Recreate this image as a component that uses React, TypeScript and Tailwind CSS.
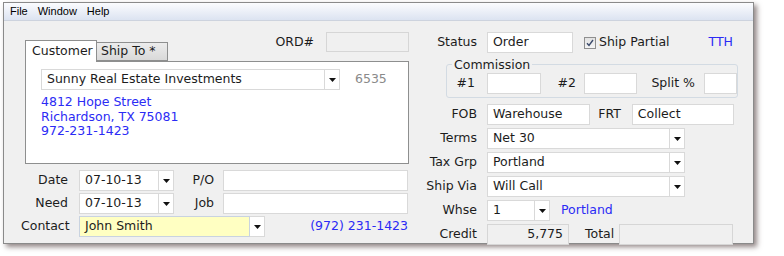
import React from "react"

const font = { fontFamily: '"DejaVu Sans", Verdana, sans-serif' }

function Caret() {
  return (
    <svg width="7" height="4" viewBox="0 0 7 4">
      <polygon points="0,0 7,0 3.5,4" fill="#111" />
    </svg>
  )
}

function DropButton({ className = "" }: { className?: string }) {
  return (
    <div className={`flex h-full w-[15px] items-center justify-center border border-[#d9d9d9] bg-white ${className}`}>
      <Caret />
    </div>
  )
}

function Field({ value = "", className = "", align = "left" }: { value?: string; className?: string; align?: "left" | "right" }) {
  return (
    <div
      className={`flex h-full items-center border border-[#d9d9d9] bg-white px-[5px] ${align === "right" ? "justify-end" : ""} ${className}`}
    >
      {value}
    </div>
  )
}

function Disabled({ value = "", className = "" }: { value?: string; className?: string }) {
  return (
    <div className={`flex h-full items-center justify-end border border-[#d6d6d6] bg-[#f0f0f0] px-[5px] ${className}`}>
      {value}
    </div>
  )
}

function Label({ children, className = "" }: { children: React.ReactNode; className?: string }) {
  return <div className={`shrink-0 text-right ${className}`}>{children}</div>
}

export default function App() {
  return (
    <div className="h-[256px] w-[784px] overflow-hidden bg-white pl-[3px] pt-[2px]" style={font}>
      <div className="h-[242px] w-[751px] border border-[#8a8a8a] bg-[#f0f0f0] text-[12.5px] text-[#1c1c1c] shadow-[3px_3px_5px_rgba(60,40,40,0.55)]">
        {/* menu bar */}
        <div
          className="flex h-[18px] items-center gap-[10px] border-b border-[#cdd3de] bg-gradient-to-b from-[#fbfcfe] to-[#dce3f1] pl-[6px] text-[11px] text-black"
          style={{ fontFamily: '"Liberation Sans", Arial, sans-serif' }}
        >
          <span>File</span>
          <span>Window</span>
          <span>Help</span>
        </div>

        <div className="flex">
          {/* left column */}
          <div className="w-[405px] shrink-0 pl-[17px] pt-[11px]">
            <div className="ml-[4px] flex h-[30px] justify-between">
              <div className="relative z-10 flex items-end">
                <div className="flex h-[22px] w-[72px] items-center border border-b-0 border-[#8e8f8f] bg-white pl-[6px] pb-[1px]">
                  Customer
                </div>
                <div className="mb-[1px] flex h-[19px] w-[71px] items-center border border-l-0 border-[#8e8f8f] bg-gradient-to-b from-[#ececec] to-[#d9d9d9] pl-[4px]">
                  Ship To *
                </div>
              </div>
              <div className="flex h-[20px] items-center">
                <span className="mr-[12px]">ORD#</span>
                <Disabled className="w-[83px]" />
              </div>
            </div>
            <div className="ml-[4px] -mt-px h-[103px] w-[384px] border border-[#8e8f8f] bg-white pl-[15px] pt-[7px]">
              <div className="flex h-[21px] items-center">
                <Field value="Sunny Real Estate Investments" className="w-[284px]" />
                <DropButton className="border-l-0" />
                <span className="ml-[15px] text-[#8a8a8a]">6535</span>
              </div>
              <div className="mt-[5px] leading-[14.5px] text-[#2b2bf5]">
                <div>4812 Hope Street</div>
                <div>Richardson, TX 75081</div>
                <div>972-231-1423</div>
              </div>
            </div>

            <div className="mt-[6px] flex flex-col gap-[2px]">
              <div className="flex h-[21px] items-center">
                <Label className="w-[47px]">Date</Label>
                <div className="ml-[11px] flex h-full">
                  <Field value="07-10-13" className="w-[80px]" />
                  <DropButton className="border-l-0" />
                </div>
                <Label className="w-[40px]">P/O</Label>
                <Field className="ml-[9px] w-[185px]" />
              </div>
              <div className="flex h-[21px] items-center">
                <Label className="w-[47px]">Need</Label>
                <div className="ml-[11px] flex h-full">
                  <Field value="07-10-13" className="w-[80px]" />
                  <DropButton className="border-l-0" />
                </div>
                <Label className="w-[40px]">Job</Label>
                <Field className="ml-[9px] w-[185px]" />
              </div>
              <div className="flex h-[21px] items-center">
                <Label className="w-[47px]">Contact</Label>
                <div className="ml-[11px] flex h-full">
                  <div className="flex h-full w-[171px] items-center border border-[#c9d3e0] bg-[#ffffc2] px-[5px]">John Smith</div>
                  <DropButton className="border-l-0" />
                </div>
                <span className="ml-auto mr-[1px] text-[#2b2bf5]">(972) 231-1423</span>
              </div>
            </div>
          </div>

          {/* right column */}
          <div className="w-[330px] shrink-0 pl-[12px] pr-[5px] pt-[11px]">
            <div className="flex h-[21px] items-center">
              <Label className="w-[56px]">Status</Label>
              <Field value="Order" className="ml-[10px] w-[86px]" />
              <div className="ml-[11px] flex h-[12px] w-[12px] items-center justify-center border border-[#8f8f8f] bg-gradient-to-b from-[#e2e2e2] to-[#f4f4f4]">
                <svg width="8" height="8" viewBox="0 0 8 8">
                  <path d="M1 4.2 L3 6.5 L7 1" fill="none" stroke="#3b4a6b" strokeWidth="1.4" />
                </svg>
              </div>
              <span className="ml-[3px]">Ship Partial</span>
              <span className="ml-auto mr-[1px] text-[#2b2bf5]">TTH</span>
            </div>

            <fieldset className="ml-[25px] mt-[4px] rounded-[3px] border border-[#d3dbe3] pb-[3px]">
              <legend className="ml-[5px] px-[2px] leading-[15px]">Commission</legend>
              <div className="mt-[1px] flex h-[21px] items-center">
                <Label className="w-[28px]">#1</Label>
                <Field className="ml-[12px] w-[54px]" />
                <Label className="w-[35px]">#2</Label>
                <Field className="ml-[8px] w-[53px]" />
                <Label className="w-[58px]">Split %</Label>
                <Field className="ml-[9px] w-[33px]" />
              </div>
            </fieldset>

            <div className="mt-[6px] flex flex-col gap-[3px]">
              <div className="flex h-[21px] items-center">
                <Label className="w-[56px]">FOB</Label>
                <Field value="Warehouse" className="ml-[10px] w-[104px]" />
                <span className="ml-[8px]">FRT</span>
                <Field value="Collect" className="ml-[11px] w-[103px]" />
              </div>
              <div className="flex h-[21px] items-center">
                <Label className="w-[56px]">Terms</Label>
                <div className="ml-[10px] flex h-full">
                  <Field value="Net 30" className="w-[183px]" />
                  <DropButton className="w-[14px] border-l-0" />
                </div>
              </div>
              <div className="flex h-[21px] items-center">
                <Label className="w-[56px]">Tax Grp</Label>
                <div className="ml-[10px] flex h-full">
                  <Field value="Portland" className="w-[183px]" />
                  <DropButton className="w-[14px] border-l-0" />
                </div>
              </div>
              <div className="flex h-[21px] items-center">
                <Label className="w-[56px]">Ship Via</Label>
                <div className="ml-[10px] flex h-full">
                  <Field value="Will Call" className="w-[183px]" />
                  <DropButton className="w-[14px] border-l-0" />
                </div>
              </div>
              <div className="flex h-[21px] items-center">
                <Label className="w-[56px]">Whse</Label>
                <div className="ml-[10px] flex h-full">
                  <Field value="1" className="w-[48px]" />
                  <DropButton className="w-[14px] border-l-0" />
                </div>
                <span className="ml-[11px] text-[#2b2bf5]">Portland</span>
              </div>
              <div className="flex h-[21px] items-center">
                <Label className="w-[56px]">Credit</Label>
                <Disabled value="5,775" className="ml-[10px] w-[82px]" />
                <span className="ml-[16px]">Total</span>
                <Disabled className="ml-[5px] w-[114px]" />
              </div>
            </div>
          </div>
        </div>
      </div>
    </div>
  )
}
